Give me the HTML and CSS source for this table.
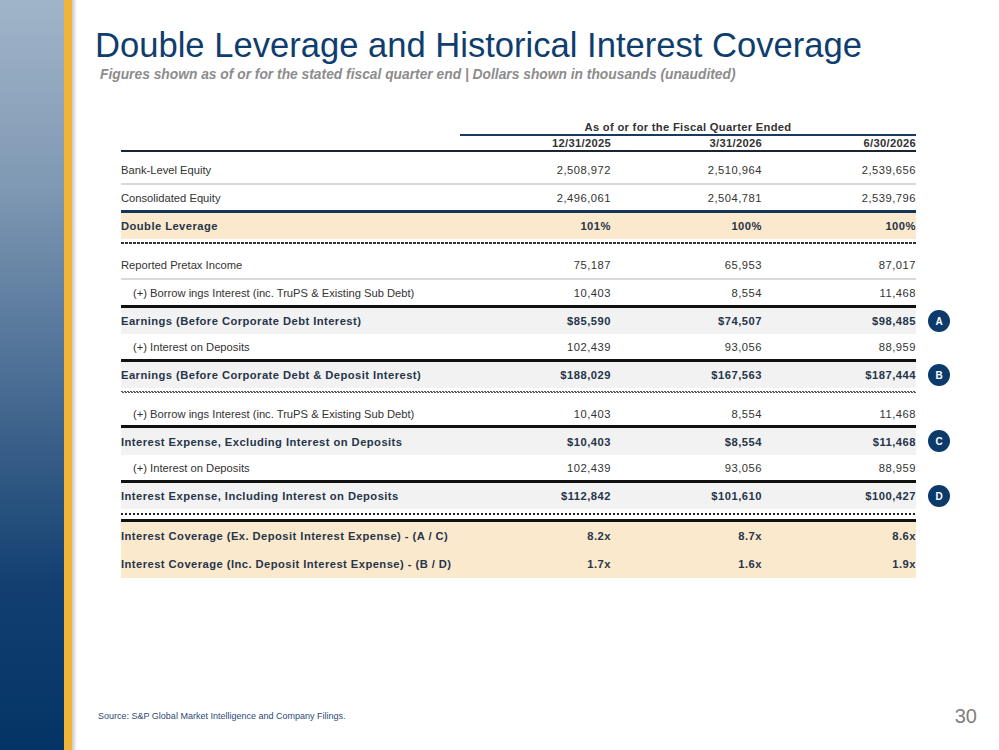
FILE: index.html
```html
<!DOCTYPE html>
<html lang="en">
<head>
    <meta charset="UTF-8">
    <title>Double Leverage and Historical Interest Coverage</title>
    <link rel="stylesheet" href="styles.css">
</head>
<body>

<div class="side"></div>
<div class="stripe"></div>
<div class="shade"></div>

<div id="main">
    <h1>Double Leverage and Historical Interest Coverage</h1>
    <div class="subtitle">Figures shown as of or for the stated fiscal quarter end | Dollars shown in thousands (unaudited)</div>

    <div class="table">
        <!-- header -->
        <div class="row head1">
            <div class="cells"><span></span><span class="group">As of or for the Fiscal Quarter Ended</span></div>
        </div>
        <div class="row head2">
            <div class="cells"><span></span><span class="num">12/31/2025</span><span class="num">3/31/2026</span><span class="num">6/30/2026</span></div>
        </div>

        <!-- equity -->
        <div class="row line-gray first">
            <div class="cells"><span>Bank-Level Equity</span><span class="num">2,508,972</span><span class="num">2,510,964</span><span class="num">2,539,656</span></div>
        </div>
        <div class="row line-navy h25">
            <div class="cells"><span>Consolidated Equity</span><span class="num">2,496,061</span><span class="num">2,504,781</span><span class="num">2,539,796</span></div>
        </div>
        <div class="row beige bold h26">
            <div class="cells"><span>Double Leverage</span><span class="num">101%</span><span class="num">100%</span><span class="num">100%</span></div>
        </div>
        <div class="rule dash"></div>

        <!-- earnings -->
        <div class="row line-gray after-rule">
            <div class="cells"><span>Reported Pretax Income</span><span class="num">75,187</span><span class="num">65,953</span><span class="num">87,017</span></div>
        </div>
        <div class="row line-black h25">
            <div class="cells"><span class="indent">(+) Borrow ings Interest (inc. TruPS &amp; Existing Sub Debt)</span><span class="num">10,403</span><span class="num">8,554</span><span class="num">11,468</span></div>
        </div>
        <div class="row total bold h26">
            <div class="cells"><span>Earnings (Before Corporate Debt Interest)</span><span class="num">$85,590</span><span class="num">$74,507</span><span class="num">$98,485</span></div>
            <i class="tag">A</i>
        </div>
        <div class="row line-black h25">
            <div class="cells"><span class="indent">(+) Interest on Deposits</span><span class="num">102,439</span><span class="num">93,056</span><span class="num">88,959</span></div>
        </div>
        <div class="row total bold h26">
            <div class="cells"><span>Earnings (Before Corporate Debt &amp; Deposit Interest)</span><span class="num">$188,029</span><span class="num">$167,563</span><span class="num">$187,444</span></div>
            <i class="tag">B</i>
        </div>
        <div class="rule wave"></div>

        <!-- interest expense -->
        <div class="row line-black h23 after-wave">
            <div class="cells"><span class="indent">(+) Borrow ings Interest (inc. TruPS &amp; Existing Sub Debt)</span><span class="num">10,403</span><span class="num">8,554</span><span class="num">11,468</span></div>
        </div>
        <div class="row total bold">
            <div class="cells"><span>Interest Expense, Excluding Interest on Deposits</span><span class="num">$10,403</span><span class="num">$8,554</span><span class="num">$11,468</span></div>
            <i class="tag">C</i>
        </div>
        <div class="row line-black h25">
            <div class="cells"><span class="indent">(+) Interest on Deposits</span><span class="num">102,439</span><span class="num">93,056</span><span class="num">88,959</span></div>
        </div>
        <div class="row total bold h26">
            <div class="cells"><span>Interest Expense, Including Interest on Deposits</span><span class="num">$112,842</span><span class="num">$101,610</span><span class="num">$100,427</span></div>
            <i class="tag">D</i>
        </div>
        <div class="rule dots"></div>
        <div class="rule heavy"></div>

        <!-- coverage -->
        <div class="row beige bold h28">
            <div class="cells"><span>Interest Coverage (Ex. Deposit Interest Expense) - (A / C)</span><span class="num">8.2x</span><span class="num">8.7x</span><span class="num">8.6x</span></div>
        </div>
        <div class="row beige bold h28">
            <div class="cells"><span>Interest Coverage (Inc. Deposit Interest Expense) - (B / D)</span><span class="num">1.7x</span><span class="num">1.6x</span><span class="num">1.9x</span></div>
        </div>
    </div>

    <div class="footer">
        <span class="source">Source: S&amp;P Global Market Intelligence and Company Filings.</span>
        <span class="page">30</span>
    </div>
</div>

</body>
</html>
```

FILE: styles.css
```css
body {
    margin: 0;
    height: 750px;
    overflow: hidden;
    display: flex;
    font-family: "Liberation Sans", Arial, sans-serif;
    background-color: #fff;
}

/* left band */
.side {
    width: 64px;
    background: linear-gradient(#a1b5c9, #7f98b3 25%, #4c6f95 50%, #123f70 78%, #043466);
}
.stripe {
    width: 8px;
    background-color: #f1b43b;
}
.shade {
    width: 5px;
    background: linear-gradient(90deg, #c9c9c9, #fff);
}

#main {
    flex: 1;
    display: flex;
    flex-direction: column;
    padding-left: 18px;
}

h1 {
    margin: 25px 0 0;
    font-size: 34.6px;
    line-height: 40px;
    font-weight: normal;
    color: #0f3e6e;
}
.subtitle {
    margin: 2px 0 0 5px;
    font-size: 13.8px;
    line-height: 16px;
    font-weight: bold;
    font-style: italic;
    color: #8c8c8c;
}

/* table */
.table {
    margin: 37px 0 0 26px;
    font-size: 11.2px;
    color: #333;
}
.row {
    display: flex;
    align-items: flex-start;
}
.cells {
    width: 795px;
    height: 27px;
    display: grid;
    grid-template-columns: 339px 151px 151px 154px;
}
.cells span {
    display: flex;
    align-items: center;
    white-space: nowrap;
}
.cells .num {
    justify-content: flex-end;
    letter-spacing: 0.5px;
}
.cells .indent {
    padding-left: 12px;
}
.bold {
    font-weight: bold;
    letter-spacing: 0.45px;
}
.bold .cells span {
    color: #26354a;
}

.h23 .cells { height: 23px; }
.h25 .cells { height: 25px; }
.h26 .cells { height: 26px; }
.h28 .cells { height: 28px; }

.head1 .cells {
    height: 16px;
}
.head1 .group {
    grid-column: 2 / 5;
    justify-content: center;
    font-weight: bold;
    letter-spacing: 0.3px;
    border-bottom: 2px solid #183a62;
}
.head2 .cells {
    height: 14px;
    font-weight: bold;
    border-bottom: 2px solid #1a2434;
}
.head2 .num {
    letter-spacing: 0.3px;
}
.first {
    margin-top: 4px;
}

.line-gray .cells {
    border-bottom: 2px solid #d9d9d9;
}
.line-navy .cells {
    border-bottom: 3px solid #14345a;
}
.line-black .cells {
    border-bottom: 3px solid #111;
}
.beige .cells {
    background-color: #fbe9cd;
}
.total .cells {
    background-color: #f2f2f2;
}

.rule {
    width: 795px;
    height: 2px;
}
.dash {
    margin-top: 3px;
    background: repeating-linear-gradient(90deg, #333 0 3px, transparent 3px 4px);
}
.wave {
    margin-top: 3px;
    background:
        repeating-linear-gradient(90deg, #555 0 2px, transparent 2px 3px) top / 100% 1px no-repeat,
        repeating-linear-gradient(90deg, transparent 0 1px, #555 1px 3px) bottom / 100% 1px no-repeat;
}
.dots {
    margin-top: 4px;
    background: repeating-linear-gradient(90deg, #222 0 2px, transparent 2px 4px);
}
.heavy {
    margin-top: 4px;
    height: 3px;
    background-color: #111;
}
.after-rule {
    margin-top: 7px;
}
.after-wave {
    margin-top: 9px;
}

/* A B C D markers */
.tag {
    width: 22px;
    height: 22px;
    margin: 2px 0 0 12px;
    border-radius: 50%;
    background-color: #0c3b6b;
    color: #fff;
    font-style: normal;
    font-weight: bold;
    font-size: 10px;
    letter-spacing: 0;
    display: flex;
    align-items: center;
    justify-content: center;
}

.footer {
    margin-top: auto;
    padding: 0 22px 19px 3px;
    height: 30px;
    display: flex;
    justify-content: space-between;
    align-items: center;
}
.source {
    font-size: 9px;
    color: #2d4a74;
}
.page {
    font-size: 20px;
    color: #7f7f7f;
}
```
